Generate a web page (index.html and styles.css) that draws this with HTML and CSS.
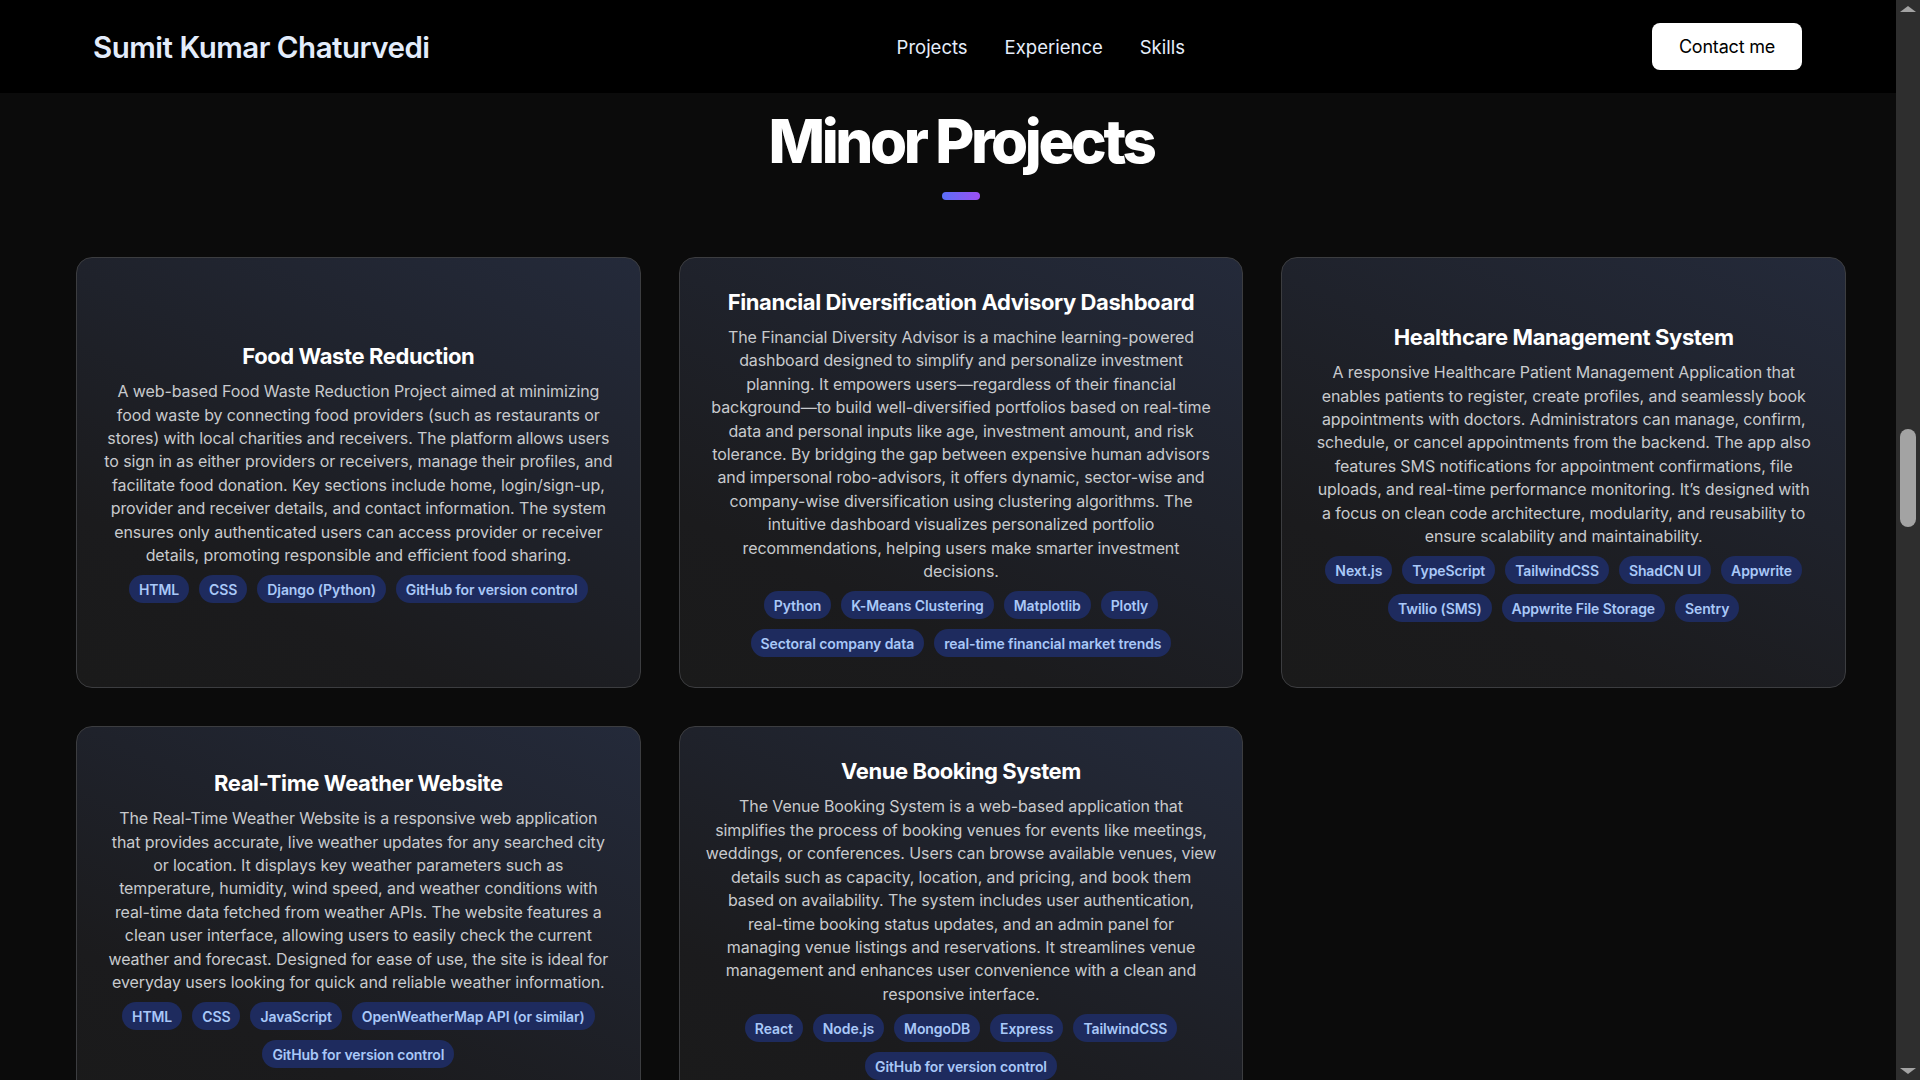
FILE: index.html
```html
<!DOCTYPE html>
<html lang="en">
<head>
<meta charset="utf-8">
<title>Sumit Kumar Chaturvedi — Minor Projects</title>
<link rel="stylesheet" href="styles.css">
</head>
<body>
<div class="page">
  <header class="topbar">
    <a class="brand" href="#">Sumit Kumar Chaturvedi</a>
    <nav class="nav">
      <a href="#">Projects</a>
      <a href="#">Experience</a>
      <a href="#">Skills</a>
    </nav>
    <a class="contact-btn" href="#">Contact me</a>
  </header>

  <main class="section">
    <h1 class="section-title">Minor Projects</h1>
    <div class="title-bar"></div>

    <div class="grid">
      <article class="card">
        <h2 class="card-title">Food Waste Reduction</h2>
        <p class="card-desc">A web-based Food Waste Reduction Project aimed at minimizing food waste by connecting food providers (such as restaurants or stores) with local charities and receivers. The platform allows users to sign in as either providers or receivers, manage their profiles, and facilitate food donation. Key sections include home, login/sign-up, provider and receiver details, and contact information. The system ensures only authenticated users can access provider or receiver details, promoting responsible and efficient food sharing.</p>
        <div class="tags">
          <span class="tag">HTML</span>
          <span class="tag">CSS</span>
          <span class="tag">Django (Python)</span>
          <span class="tag">GitHub for version control</span>
        </div>
      </article>

      <article class="card">
        <h2 class="card-title">Financial Diversification Advisory Dashboard</h2>
        <p class="card-desc">The Financial Diversity Advisor is a machine learning-powered dashboard designed to simplify and personalize investment planning. It empowers users—regardless of their financial background—to build well-diversified portfolios based on real-time data and personal inputs like age, investment amount, and risk tolerance. By bridging the gap between expensive human advisors and impersonal robo-advisors, it offers dynamic, sector-wise and company-wise diversification using clustering algorithms. The intuitive dashboard visualizes personalized portfolio recommendations, helping users make smarter investment decisions.</p>
        <div class="tags">
          <span class="tag">Python</span>
          <span class="tag">K-Means Clustering</span>
          <span class="tag">Matplotlib</span>
          <span class="tag">Plotly</span>
          <span class="tag">Sectoral company data</span>
          <span class="tag">real-time financial market trends</span>
        </div>
      </article>

      <article class="card">
        <h2 class="card-title">Healthcare Management System</h2>
        <p class="card-desc">A responsive Healthcare Patient Management Application that enables patients to register, create profiles, and seamlessly book appointments with doctors. Administrators can manage, confirm, schedule, or cancel appointments from the backend. The app also features SMS notifications for appointment confirmations, file uploads, and real-time performance monitoring. It’s designed with<br>a focus on clean code architecture, modularity, and reusability to ensure scalability and maintainability.</p>
        <div class="tags">
          <span class="tag">Next.js</span>
          <span class="tag">TypeScript</span>
          <span class="tag">TailwindCSS</span>
          <span class="tag">ShadCN UI</span>
          <span class="tag">Appwrite</span>
          <span class="tag">Twilio (SMS)</span>
          <span class="tag">Appwrite File Storage</span>
          <span class="tag">Sentry</span>
        </div>
      </article>

      <article class="card">
        <h2 class="card-title">Real-Time Weather Website</h2>
        <p class="card-desc">The Real-Time Weather Website is a responsive web application that provides accurate, live weather updates for any searched city<br>or location. It displays key weather parameters such as<br>temperature, humidity, wind speed, and weather conditions with<br>real-time data fetched from weather APIs. The website features a<br>clean user interface, allowing users to easily check the current<br>weather and forecast. Designed for ease of use, the site is ideal for<br>everyday users looking for quick and reliable weather information.</p>
        <div class="tags">
          <span class="tag">HTML</span>
          <span class="tag">CSS</span>
          <span class="tag">JavaScript</span>
          <span class="tag">OpenWeatherMap API (or similar)</span>
          <span class="tag">GitHub for version control</span>
        </div>
      </article>

      <article class="card">
        <h2 class="card-title">Venue Booking System</h2>
        <p class="card-desc">The Venue Booking System is a web-based application that simplifies the process of booking venues for events like meetings, weddings, or conferences. Users can browse available venues, view<br>details such as capacity, location, and pricing, and book them<br>based on availability. The system includes user authentication,<br>real-time booking status updates, and an admin panel for<br>managing venue listings and reservations. It streamlines venue<br>management and enhances user convenience with a clean and<br>responsive interface.</p>
        <div class="tags">
          <span class="tag">React</span>
          <span class="tag">Node.js</span>
          <span class="tag">MongoDB</span>
          <span class="tag">Express</span>
          <span class="tag">TailwindCSS</span>
          <span class="tag">GitHub for version control</span>
        </div>
      </article>
    </div>
  </main>
</div>

<div class="scrollbar" aria-hidden="true">
  <span class="sb-arrow sb-up"></span>
  <span class="sb-track"><span class="sb-thumb"></span></span>
  <span class="sb-arrow sb-down"></span>
</div>
</body>
</html>
```

FILE: styles.css
```css
html {
  scrollbar-width: none;
}
html::-webkit-scrollbar {
  display: none;
}

body {
  margin: 0;
  background: #0b0b0b;
  color: #ffffff;
  font-family: Inter, "Noto Sans", "Liberation Sans", sans-serif;
  display: flex;
  align-items: flex-start;
}

a {
  text-decoration: none;
  color: inherit;
}

.page {
  flex: 1;
  min-width: 0;
}

/* ---------- header ---------- */
.topbar {
  height: 93px;
  background: #000000;
  display: flex;
  align-items: center;
  justify-content: space-between;
  padding: 0 94px 0 93px;
}

.brand {
  font-size: 29.5px;
  font-weight: 600;
  letter-spacing: -0.5px;
  color: #e3ecfb;
}

.nav {
  display: flex;
  gap: 37px;
  font-size: 18.5px;
  color: #e6eefb;
}

.contact-btn {
  height: 47px;
  width: 150px;
  box-sizing: border-box;
  display: flex;
  align-items: center;
  justify-content: center;
  background: #ffffff;
  color: #000000;
  border-radius: 8px;
  font-size: 18px;
  letter-spacing: -0.2px;
}

/* ---------- section ---------- */
.section {
  padding: 12px 50px 80px 76px;
  display: flex;
  flex-direction: column;
  align-items: center;
}

.section-title {
  margin: 0;
  font-size: 60px;
  line-height: 72px;
  font-weight: 800;
  letter-spacing: -3.4px;
  color: #ffffff;
}

.title-bar {
  width: 38px;
  height: 8px;
  margin-top: 15px;
  border-radius: 4px;
  background: linear-gradient(90deg, #5a6ff8, #9d4ff3);
}

.grid {
  margin-top: 57px;
  width: 100%;
  display: grid;
  grid-template-columns: repeat(3, 1fr);
  gap: 38px;
}

.card {
  box-sizing: border-box;
  border: 1px solid #3c3d40;
  border-radius: 16px;
  background: linear-gradient(205deg, #242a3a 0%, #1f222b 40%, #1b1b1d 75%, #1a1a1a 100%);
  padding: 30px 26px;
  display: flex;
  flex-direction: column;
  justify-content: center;
  align-items: center;
  text-align: center;
}

.card-title {
  margin: 0 0 10px;
  font-size: 22px;
  line-height: 28px;
  font-weight: 700;
  letter-spacing: -0.4px;
  color: #ffffff;
}

.card-desc {
  margin: 0;
  font-size: 16px;
  line-height: 23.4px;
  color: #c8cacd;
  letter-spacing: -0.1px;
}

.tags {
  margin-top: 8px;
  display: flex;
  flex-wrap: wrap;
  justify-content: center;
  gap: 10px;
}

.tag {
  height: 28px;
  display: inline-flex;
  align-items: center;
  padding: 0 10px;
  border-radius: 999px;
  background: #1e2b5e;
  color: #a9c8f8;
  font-size: 14px;
  font-weight: 600;
  letter-spacing: -0.1px;
}

/* ---------- scrollbar column ---------- */
.scrollbar {
  position: sticky;
  top: 0;
  width: 24px;
  height: 100vh;
  flex: none;
  background: #2e2e2e;
  display: flex;
  flex-direction: column;
  align-items: center;
}

.sb-arrow {
  width: 0;
  height: 0;
  border-left: 8px solid transparent;
  border-right: 8px solid transparent;
  margin: 6px 0;
}
.sb-up {
  border-bottom: 6px solid #a3a3a3;
}
.sb-down {
  border-top: 6px solid #a3a3a3;
}

.sb-track {
  flex: 1;
  width: 100%;
  display: flex;
  justify-content: center;
}

.sb-thumb {
  margin-top: 411px;
  width: 16px;
  height: 98px;
  border-radius: 8px;
  background: #a3a3a3;
}
```
